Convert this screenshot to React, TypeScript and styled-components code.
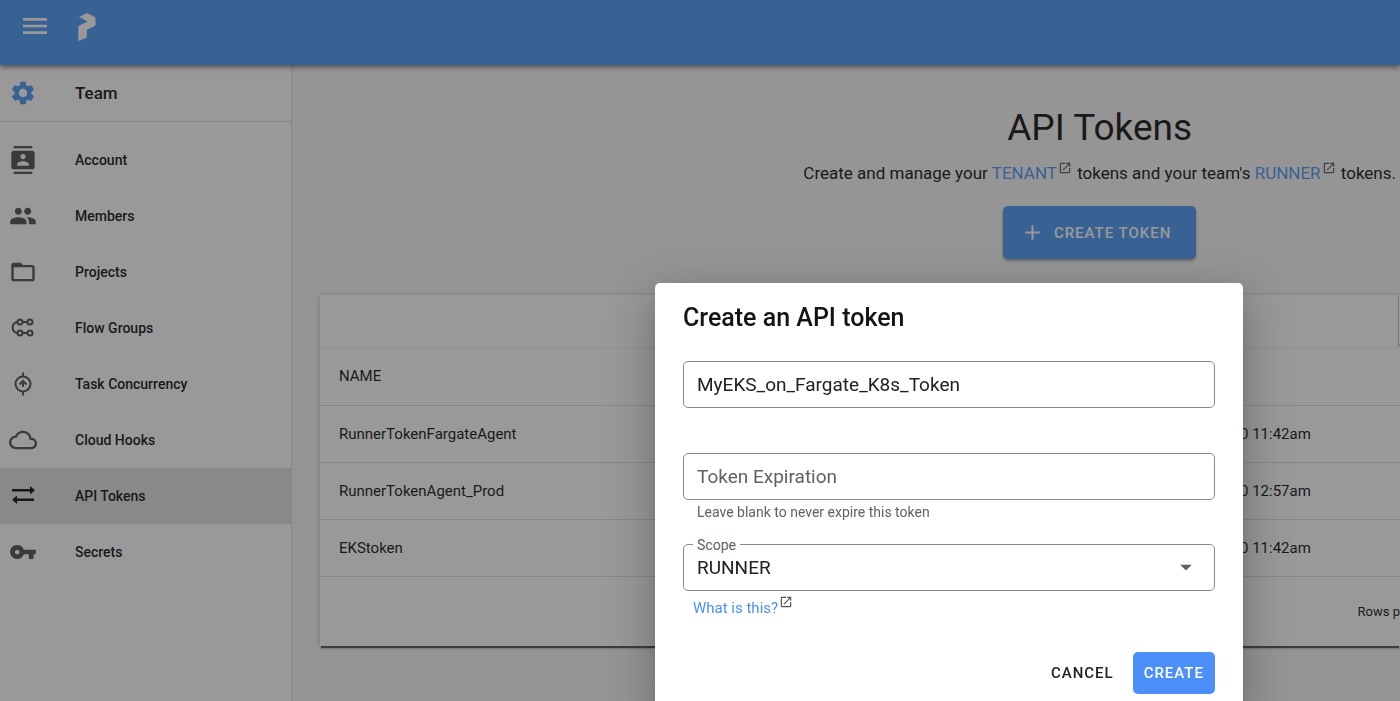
import React from 'react';
import styled, { createGlobalStyle } from 'styled-components';
import {
  MdSettings, MdPeople, MdFolderOpen, MdVpnKey, MdOutlineCloud, MdOpenInNew, MdArrowDropDown, MdMenu, MdContacts, MdAdd,
} from 'react-icons/md';

const PRIMARY = '#4c8ff8';
const BAR = '#4f99f5';

const Global = createGlobalStyle`
  *, *::before, *::after { box-sizing: border-box; }
  html, body { height: 100%; }
  body {
    margin: 0;
    font-family: Roboto, "Liberation Sans", sans-serif;
    font-size: 16px;
    color: #141414;
    background: #f8f8f8;
    overflow: hidden;
  }
  button, input, select { font-family: inherit; }
  a { text-decoration: none; color: inherit; }
`;

const Page = styled.div`
  display: flex;
  flex-direction: column;
  min-height: 100vh;
`;

const AppBar = styled.header`
  display: flex;
  align-items: flex-start;
  gap: 27px;
  height: 65px;
  padding: 10px 19px;
  background: ${BAR};
  color: #fff;
  box-shadow: 0 2px 4px rgba(0, 0, 0, 0.4), 0 4px 6px rgba(0, 0, 0, 0.14);
  z-index: 1;
`;

const IconButton = styled.button`
  display: flex;
  padding: 0;
  border: 0;
  background: none;
  color: inherit;
`;

const HomeLink = styled.a`
  display: flex;
  padding-top: 2px;
`;

const Body = styled.div`
  display: flex;
  flex: 1;
`;

const Sidebar = styled.nav`
  flex: 0 0 292px;
  background: #fff;
  border-right: 1px solid #dcdcdc;
`;

const SidebarTitle = styled.h2`
  display: flex;
  align-items: center;
  gap: 38px;
  height: 57px;
  margin: 0 0 10px;
  padding: 0 9px;
  border-bottom: 1px solid #dcdcdc;
  font-size: 17px;
  font-weight: 500;

  svg { color: ${BAR}; }
`;

const NavItem = styled.a<{ $active?: boolean }>`
  display: flex;
  align-items: center;
  gap: 38px;
  height: 56px;
  padding: 0 9px;
  font-size: 14px;
  font-weight: 500;
  background: ${({ $active }) => ($active ? '#e2e2e2' : 'transparent')};

  svg { flex: none; color: ${({ $active }) => ($active ? '#111' : '#505050')}; }
`;

const Main = styled.main`
  display: flex;
  flex-direction: column;
  flex: 1;
  min-width: 0;
  padding: 39px 0 0 28px;
`;

const Hero = styled.section`
  display: flex;
  flex-direction: column;
  align-items: center;
  align-self: flex-end;
  padding-right: 4px;
`;

const Title = styled.h1`
  margin: 0;
  font-size: 37px;
  font-weight: 400;
  line-height: 48px;
`;

const Subtitle = styled.p`
  margin: 9px 0 21px;
  font-size: 17px;
  line-height: 24px;
  white-space: nowrap;
`;

const TextLink = styled.a`
  color: ${BAR};

  svg { margin: 0 1px; color: #555; vertical-align: 4px; }
`;

const CreateTokenButton = styled.button`
  display: flex;
  align-items: center;
  gap: 9px;
  height: 53px;
  padding: 0 25px 0 17px;
  border: 0;
  border-radius: 5px;
  background: ${BAR};
  color: #fff;
  font-size: 15px;
  font-weight: 500;
  letter-spacing: 1px;
  box-shadow: 0 2px 3px rgba(0, 0, 0, 0.35);
`;

const Card = styled.section`
  margin-top: 36px;
  background: #fff;
  box-shadow: 0 3px 1px -1px rgba(0, 0, 0, 0.6), 0 1px 5px rgba(0, 0, 0, 0.25);
`;

const CardToolbar = styled.div`
  display: flex;
  justify-content: flex-end;
  height: 53px;
  border-bottom: 1px solid #eee;
`;

const SearchEdge = styled.div`
  width: 2px;
  height: 51px;
  border-left: 1px solid #ccc;
  border-bottom: 1px solid #999;
`;

const Table = styled.table`
  width: 100%;
  border-collapse: collapse;
  table-layout: fixed;
  font-size: 15px;

  th, td {
    height: 57px;
    padding: 0 19px;
    border-bottom: 1px solid #dedede;
    font-weight: 400;
    text-align: left;
  }
`;

const TimeColumn = styled.col`
  width: 179px;
`;

const CardFooter = styled.footer`
  display: flex;
  justify-content: flex-end;
  align-items: center;
  height: 69px;
  font-size: 13px;
`;

const Overlay = styled.div`
  position: fixed;
  inset: 0;
  z-index: 5;
  display: flex;
  justify-content: flex-end;
  align-items: flex-start;
  padding: 283px 157px 0 0;
  background: rgba(33, 33, 33, 0.46);
  overflow: hidden;
`;

const Dialog = styled.form`
  display: flex;
  flex-direction: column;
  width: 588px;
  padding: 20px 28px;
  border-radius: 5px;
  background: #fff;
  box-shadow: 0 11px 15px -7px rgba(0, 0, 0, 0.2), 0 24px 38px 3px rgba(0, 0, 0, 0.14), 0 9px 46px 8px rgba(0, 0, 0, 0.12);
`;

const DialogTitle = styled.h2`
  margin: 0 0 28px;
  font-size: 25px;
  font-weight: 500;
  line-height: 30px;
`;

const Outline = styled.input`
  display: block;
  width: 100%;
  height: 47px;
  padding: 0 13px;
  border: 1px solid #8a8a8a;
  border-radius: 5px;
  background: #fff;
  color: #212121;
  font-size: 19px;
  outline: 0;

  &::placeholder { color: #616161; opacity: 1; }
`;

const Field = styled.div<{ $space: number }>`
  position: relative;
  margin-bottom: ${({ $space }) => $space}px;
`;

const Hint = styled.p`
  margin: 2px 0 0 14px;
  color: #616161;
  font-size: 14px;
  line-height: 20px;
`;

const FloatingLabel = styled.label`
  position: absolute;
  top: -7px;
  left: 10px;
  padding: 0 4px;
  background: #fff;
  color: #616161;
  font-size: 14px;
  line-height: 16px;
`;

const Select = styled(Outline).attrs({ as: 'select' })`
  appearance: none;
`;

const SelectArrow = styled.span`
  position: absolute;
  top: 9px;
  right: 15px;
  display: flex;
  color: #616161;
  pointer-events: none;
`;

const HelpLink = styled(TextLink)`
  align-self: flex-start;
  margin-left: 10px;
  color: ${PRIMARY};
  font-size: 15px;
  line-height: 20px;
`;

const Actions = styled.div`
  display: flex;
  justify-content: flex-end;
  gap: 8px;
  margin-top: 34px;
`;

const DialogButton = styled.button<{ $primary?: boolean }>`
  height: 42px;
  padding: 0 11px;
  border: 0;
  border-radius: 5px;
  background: ${({ $primary }) => ($primary ? PRIMARY : 'transparent')};
  color: ${({ $primary }) => ($primary ? '#fff' : '#212121')};
  font-size: 15px;
  font-weight: 500;
  letter-spacing: 1px;
`;

const Logo = () => (
  <svg width="20" height="30" viewBox="0 0 20 30" fill="#fff" role="img" aria-label="Home">
    <path d="M1 4.800 L9.200 1 L17.500 5.500 V13.500 L8.800 18 V25.500 L0.300 29 V14 L9.500 9.500 Z" />
  </svg>
);

const FlowGroupsIcon = () => (
  <svg width="28" height="28" viewBox="0 0 28 28" fill="none" stroke="currentColor" strokeWidth="2">
    <circle cx="11" cy="8" r="2.500" /><circle cx="21" cy="8" r="2.500" />
    <circle cx="11" cy="19" r="2.500" /><circle cx="21" cy="19" r="2.500" />
    <path d="M13.500 8h5M13.500 19h5M8.500 8C2 9 2 18 8.500 19" />
  </svg>
);

const ConcurrencyIcon = () => (
  <svg width="28" height="28" viewBox="0 0 28 28" fill="none" stroke="currentColor" strokeWidth="2">
    <circle cx="14" cy="14" r="7.500" />
    <path d="M14 2.500v4M14 21.500v4M14 12v5M10.500 14.500l3.500-3.500 3.500 3.500" />
  </svg>
);

const ArrowsIcon = () => (
  <svg width="28" height="28" viewBox="0 0 28 28" fill="currentColor">
    <path d="M3 7h18V4l5 4.300-5 4.200V9.500H3zM25 16.500H8v-3l-5 4.300 5 4.200v-3h17z" />
  </svg>
);

const navItems = [
  { label: 'Account', icon: <MdContacts size={28} /> },
  { label: 'Members', icon: <MdPeople size={28} /> },
  { label: 'Projects', icon: <MdFolderOpen size={28} /> },
  { label: 'Flow Groups', icon: <FlowGroupsIcon /> },
  { label: 'Task Concurrency', icon: <ConcurrencyIcon /> },
  { label: 'Cloud Hooks', icon: <MdOutlineCloud size={28} /> },
  { label: 'API Tokens', icon: <ArrowsIcon />, active: true },
  { label: 'Secrets', icon: <MdVpnKey size={28} /> },
];

const tokens = [
  { name: 'RunnerTokenFargateAgent', time: '0 11:42am' },
  { name: 'RunnerTokenAgent_Prod', time: '0 12:57am' },
  { name: 'EKStoken', time: '0 11:42am' },
];

export default function App() {
  return (
    <>
      <Global />
      <Page>
        <AppBar>
          <IconButton aria-label="Menu"><MdMenu size={32} /></IconButton>
          <HomeLink href="#"><Logo /></HomeLink>
        </AppBar>
        <Body>
          <Sidebar>
            <SidebarTitle><MdSettings size={28} />Team</SidebarTitle>
            {navItems.map(({ label, icon, active }) => (
              <NavItem key={label} href="#" $active={active}>{icon}{label}</NavItem>
            ))}
          </Sidebar>
          <Main>
            <Hero>
              <Title>API Tokens</Title>
              <Subtitle>
                Create and manage your <TextLink href="#">TENANT<MdOpenInNew size={14} /></TextLink> tokens and your team's{' '}
                <TextLink href="#">RUNNER<MdOpenInNew size={14} /></TextLink> tokens.
              </Subtitle>
              <CreateTokenButton><MdAdd size={25} />CREATE TOKEN</CreateTokenButton>
            </Hero>
            <Card>
              <CardToolbar><SearchEdge /></CardToolbar>
              <Table>
                <colgroup><col /><TimeColumn /></colgroup>
                <thead><tr><th>NAME</th><th /></tr></thead>
                <tbody>
                  {tokens.map(({ name, time }) => (
                    <tr key={name}><td>{name}</td><td>{time}</td></tr>
                  ))}
                </tbody>
              </Table>
              <CardFooter>Rows p</CardFooter>
            </Card>
          </Main>
        </Body>
      </Page>
      <Overlay>
        <Dialog role="dialog" aria-labelledby="dialog-title">
          <DialogTitle id="dialog-title">Create an API token</DialogTitle>
          <Field $space={45}>
            <Outline aria-label="Token name" defaultValue="MyEKS_on_Fargate_K8s_Token" />
          </Field>
          <Field $space={22}>
            <Outline aria-label="Token Expiration" placeholder="Token Expiration" />
            <Hint>Leave blank to never expire this token</Hint>
          </Field>
          <Field $space={4}>
            <Select id="scope"><option>RUNNER</option></Select>
            <FloatingLabel htmlFor="scope">Scope</FloatingLabel>
            <SelectArrow><MdArrowDropDown size={28} /></SelectArrow>
          </Field>
          <HelpLink href="#">What is this?<MdOpenInNew size={14} /></HelpLink>
          <Actions>
            <DialogButton type="button">CANCEL</DialogButton>
            <DialogButton type="button" $primary>CREATE</DialogButton>
          </Actions>
        </Dialog>
      </Overlay>
    </>
  );
}
